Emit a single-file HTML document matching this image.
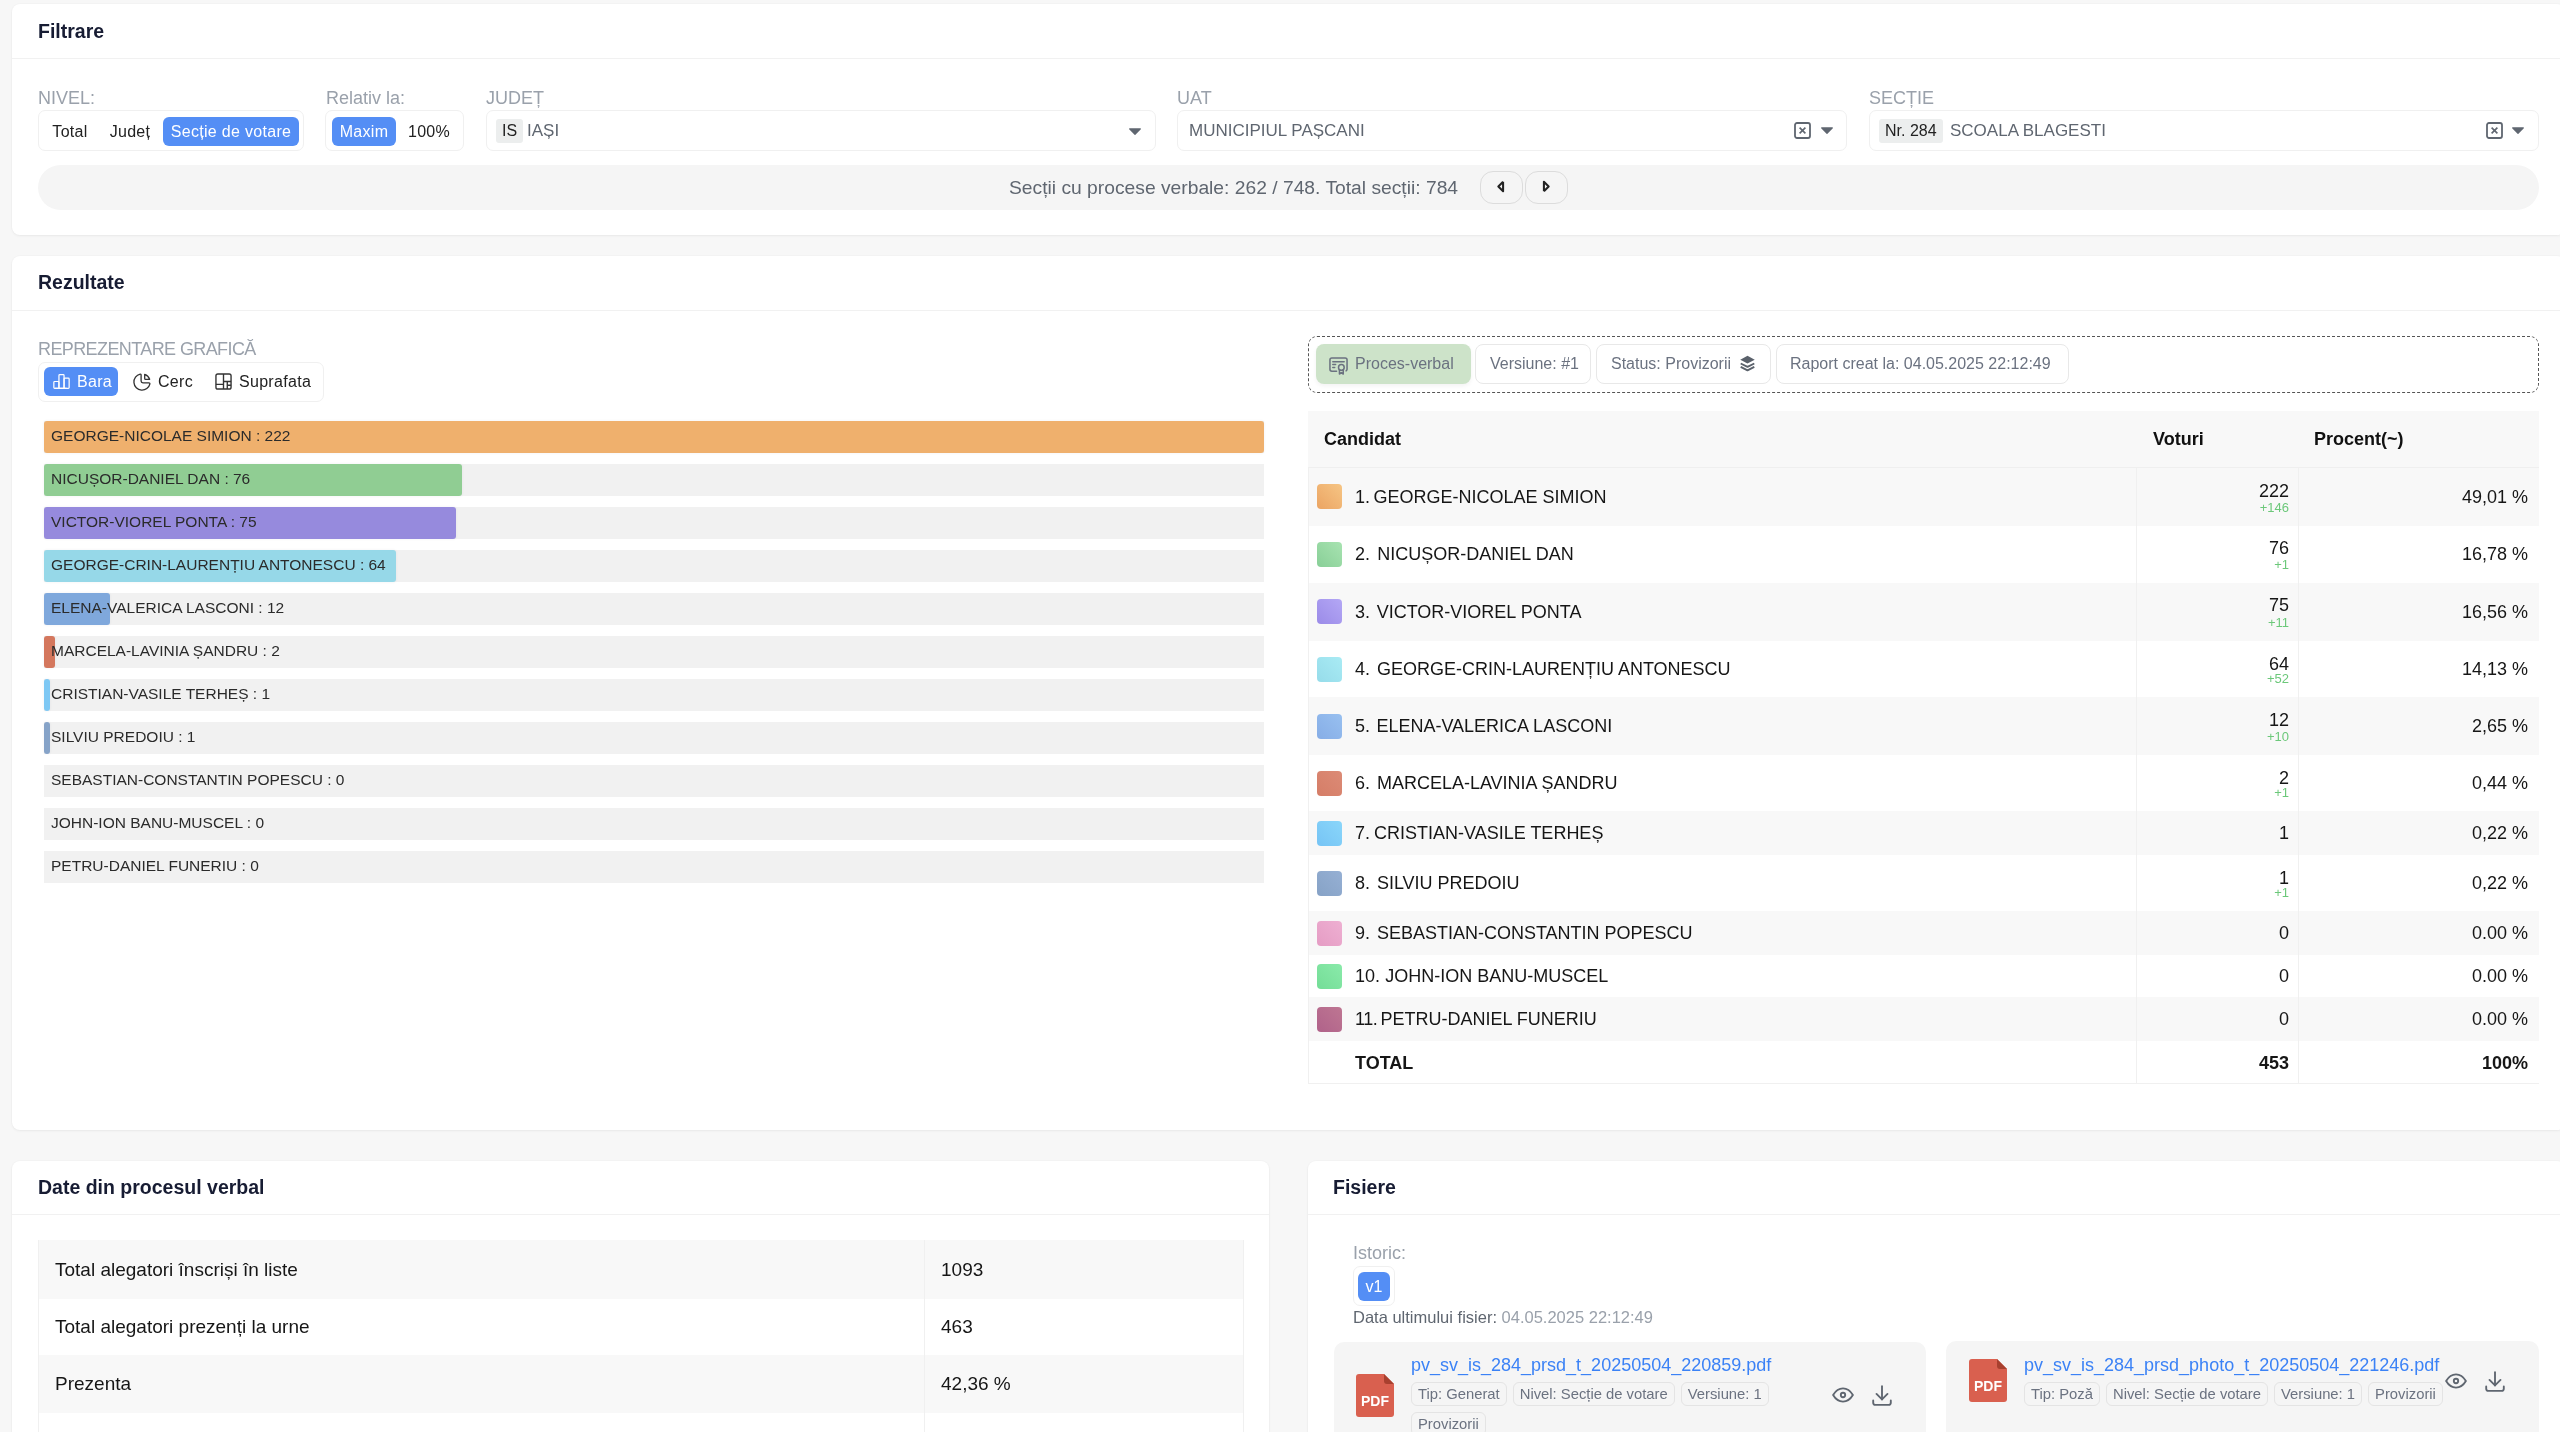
<!DOCTYPE html><html><head><meta charset="utf-8"><style>
*{box-sizing:border-box;margin:0;padding:0}
html,body{width:2560px;height:1432px;overflow:hidden;background:#f7f7f7;}
body{will-change:transform;font-family:"Liberation Sans",sans-serif;color:#222}
.abs{position:absolute;white-space:nowrap}
.card{position:absolute;background:#fff;border-radius:8px;box-shadow:0 1px 3px rgba(0,0,0,0.05),0 0 0 1px rgba(0,0,0,0.012)}
.chead{position:absolute;left:0;right:0;top:0;border-bottom:1px solid #f1f1f1}
.title{position:absolute;left:26px;font-size:19.5px;font-weight:bold;color:#171c33;white-space:nowrap;line-height:24px}
.lbl{position:absolute;font-size:18px;color:#9aa1ab;line-height:20px;white-space:nowrap}
.box{position:absolute;border:1px solid #f0f0f0;border-radius:7px;background:#fff}
.seg{position:absolute;font-size:16px;letter-spacing:0.3px;line-height:29px;height:29px;color:#222;white-space:nowrap;text-align:center;border-radius:6px}
.seg.on{background:#548ef5;color:#fff}
.tag{position:absolute;background:#eceeee;color:#222;font-size:16px;line-height:24px;border-radius:3px;padding:0 6px;white-space:nowrap}
.val{position:absolute;font-size:17px;color:#5f6670;line-height:24px;white-space:nowrap}
svg{position:absolute;overflow:visible}
.trk{position:absolute;left:44px;width:1220px;height:32px;background:#f1f1f1}
.bar{position:absolute;left:44px;height:32px;border-radius:3px;box-shadow:0 0 3px rgba(40,50,90,0.07)}
.btx{position:absolute;left:51px;font-size:15.5px;line-height:30px;color:#2b2b2b;white-space:nowrap}
.pill{position:absolute;top:344px;height:40px;border:1px solid #e8e8e8;border-radius:8px;font-size:16px;line-height:38px;color:#6b7280;white-space:nowrap}
.row{position:absolute;left:1308px;width:1231px;border-left:1px solid #f0f0f0}
.cn{position:absolute;left:1355px;font-size:18px;line-height:22px;color:#161616;white-space:nowrap}
.sq{position:absolute;left:1317px;width:25px;height:25px;border-radius:4px}
.vn{position:absolute;right:271px;font-size:18px;line-height:20px;color:#161616;text-align:right;white-space:nowrap}
.vd{position:absolute;right:271px;font-size:13px;line-height:14px;color:#6cc87a;text-align:right;white-space:nowrap}
.pc{position:absolute;right:32px;font-size:18px;line-height:22px;color:#161616;text-align:right;white-space:nowrap}
.vline{position:absolute;width:1px;background:#f0f0f0}
.ftag{height:24px;border:1px solid #e4e4e4;border-radius:6px;font-size:14.8px;line-height:22px;color:#6b7280;padding:0 6px;white-space:nowrap}
.ftags{position:absolute;display:flex;flex-wrap:wrap;gap:6px 6px}
</style></head><body>
<div class="card" style="left:12px;top:4px;width:2553px;height:231px"><div class="chead" style="height:55px"></div><div class="title" style="top:15px">Filtrare</div></div>
<div class="lbl" style="left:38px;top:88px">NIVEL:</div>
<div class="box" style="left:38px;top:110px;width:266px;height:41px"></div>
<div class="seg" style="left:44px;top:117px;width:52px">Total</div>
<div class="seg" style="left:100px;top:117px;width:60px">Județ</div>
<div class="seg on" style="left:163px;top:117px;width:136px">Secție de votare</div>
<div class="lbl" style="left:326px;top:88px">Relativ la:</div>
<div class="box" style="left:325px;top:110px;width:139px;height:41px"></div>
<div class="seg on" style="left:332px;top:117px;width:64px">Maxim</div>
<div class="seg" style="left:400px;top:117px;width:58px">100%</div>
<div class="lbl" style="left:486px;top:88px">JUDEȚ</div>
<div class="box" style="left:486px;top:110px;width:670px;height:41px"></div>
<div class="tag" style="left:496px;top:119px">IS</div>
<div class="val" style="left:527px;top:119px">IAȘI</div>
<svg style="left:1129px;top:128px" width="12" height="7" viewBox="0 0 12 7"><path d="M0.6 0.3h10.8a0.6 0.6 0 0 1 0.45 1l-5.4 5.4a0.6 0.6 0 0 1 -0.9 0l-5.4 -5.4a0.6 0.6 0 0 1 0.45 -1z" fill="#5f6670"/></svg>
<div class="lbl" style="left:1177px;top:88px">UAT</div>
<div class="box" style="left:1177px;top:110px;width:670px;height:41px"></div>
<div class="val" style="left:1189px;top:119px">MUNICIPIUL PAȘCANI</div>
<svg style="left:1794px;top:122px" width="17" height="17" viewBox="0 0 17 17"><rect x="1" y="1" width="15" height="15" rx="2" fill="none" stroke="#5f6670" stroke-width="1.8"/><path d="M5.6 5.6l5.8 5.8M11.4 5.6l-5.8 5.8" stroke="#5f6670" stroke-width="1.6" fill="none"/></svg>
<svg style="left:1821px;top:127px" width="12" height="7" viewBox="0 0 12 7"><path d="M0.6 0.3h10.8a0.6 0.6 0 0 1 0.45 1l-5.4 5.4a0.6 0.6 0 0 1 -0.9 0l-5.4 -5.4a0.6 0.6 0 0 1 0.45 -1z" fill="#5f6670"/></svg>
<div class="lbl" style="left:1869px;top:88px">SECȚIE</div>
<div class="box" style="left:1869px;top:110px;width:670px;height:41px"></div>
<div class="tag" style="left:1879px;top:119px">Nr. 284</div>
<div class="val" style="left:1950px;top:119px">SCOALA BLAGESTI</div>
<svg style="left:2486px;top:122px" width="17" height="17" viewBox="0 0 17 17"><rect x="1" y="1" width="15" height="15" rx="2" fill="none" stroke="#5f6670" stroke-width="1.8"/><path d="M5.6 5.6l5.8 5.8M11.4 5.6l-5.8 5.8" stroke="#5f6670" stroke-width="1.6" fill="none"/></svg>
<svg style="left:2512px;top:127px" width="12" height="7" viewBox="0 0 12 7"><path d="M0.6 0.3h10.8a0.6 0.6 0 0 1 0.45 1l-5.4 5.4a0.6 0.6 0 0 1 -0.9 0l-5.4 -5.4a0.6 0.6 0 0 1 0.45 -1z" fill="#5f6670"/></svg>
<div class="abs" style="left:38px;top:165px;width:2501px;height:45px;border-radius:23px;background:#f5f5f5"></div>
<div class="abs" style="left:1009px;top:176px;font-size:19.25px;line-height:24px;color:#5f6670">Secții cu procese verbale: 262 / 748. Total secții: 784</div>
<div class="abs" style="left:1480px;top:171px;width:43px;height:33px;border:1px solid #dcdcdc;border-radius:13px"></div>
<div class="abs" style="left:1525px;top:171px;width:43px;height:33px;border:1px solid #dcdcdc;border-radius:13px"></div>
<svg style="left:1492px;top:177px" width="19" height="19" viewBox="0 0 24 24"><path d="M14 6l-6 6l6 6v-12" fill="none" stroke="#222" stroke-width="2.6" stroke-linejoin="round"/></svg>
<svg style="left:1536px;top:177px" width="19" height="19" viewBox="0 0 24 24"><path d="M10 18l6 -6l-6 -6v12" fill="none" stroke="#222" stroke-width="2.6" stroke-linejoin="round"/></svg>
<div class="card" style="left:12px;top:256px;width:2553px;height:874px"><div class="chead" style="height:55px"></div><div class="title" style="top:14px">Rezultate</div></div>
<div class="lbl" style="left:38px;top:339px;letter-spacing:-0.6px">REPREZENTARE GRAFICĂ</div>
<div class="box" style="left:38px;top:362px;width:286px;height:40px"></div>
<div class="seg on" style="left:44px;top:367px;width:74px"></div>
<div class="seg" style="left:77px;top:367px;color:#fff">Bara</div>
<div class="seg" style="left:158px;top:367px">Cerc</div>
<div class="seg" style="left:239px;top:367px">Suprafata</div>
<svg style="left:53px;top:373px" width="17" height="17" viewBox="2 3 20 18"><g fill="none" stroke="#fff" stroke-width="1.45" stroke-linejoin="round"><path d="M3 13a1 1 0 0 1 1 -1h4a1 1 0 0 1 1 1v6a1 1 0 0 1 -1 1h-4a1 1 0 0 1 -1 -1z"/><path d="M15 9a1 1 0 0 1 1 -1h4a1 1 0 0 1 1 1v10a1 1 0 0 1 -1 1h-4a1 1 0 0 1 -1 -1z"/><path d="M9 5a1 1 0 0 1 1 -1h4a1 1 0 0 1 1 1v14a1 1 0 0 1 -1 1h-4a1 1 0 0 1 -1 -1z"/><path d="M4 20h14"/></g></svg>
<svg style="left:133px;top:373px" width="18" height="18" viewBox="2 2 20 20"><g fill="none" stroke="#333" stroke-width="1.45" stroke-linejoin="round" stroke-linecap="round"><path d="M10 3.2a9 9 0 1 0 10.8 10.8a1 1 0 0 0 -1 -1h-6.8a2 2 0 0 1 -2 -2v-7a.9 .9 0 0 0 -1 -.8"/><path d="M15 3.5a9 9 0 0 1 5.5 5.5h-4.5a1 1 0 0 1 -1 -1v-4.5"/></g></svg>
<svg style="left:215px;top:373px" width="17" height="17" viewBox="3 3 18 18"><g fill="none" stroke="#333" stroke-width="1.45" stroke-linejoin="round"><rect x="4" y="4" width="16" height="16" rx="2"/><path d="M12 4v16M4 15h8M12 12h8M16 12v8M16 16h4"/></g></svg>
<div class="trk" style="top:421px"></div>
<div class="bar" style="top:421px;width:1220.0px;background:#efb06d"></div>
<div class="btx" style="top:421px">GEORGE-NICOLAE SIMION : 222</div>
<div class="trk" style="top:464px"></div>
<div class="bar" style="top:464px;width:417.7px;background:#90cd93"></div>
<div class="btx" style="top:464px">NICUȘOR-DANIEL DAN : 76</div>
<div class="trk" style="top:507px"></div>
<div class="bar" style="top:507px;width:412.2px;background:#968add"></div>
<div class="btx" style="top:507px">VICTOR-VIOREL PONTA : 75</div>
<div class="trk" style="top:550px"></div>
<div class="bar" style="top:550px;width:351.7px;background:#96d8e8"></div>
<div class="btx" style="top:550px">GEORGE-CRIN-LAURENȚIU ANTONESCU : 64</div>
<div class="trk" style="top:593px"></div>
<div class="bar" style="top:593px;width:65.9px;background:#7fa8dc"></div>
<div class="btx" style="top:593px">ELENA-VALERICA LASCONI : 12</div>
<div class="trk" style="top:636px"></div>
<div class="bar" style="top:636px;width:11.0px;background:#d4775d"></div>
<div class="btx" style="top:636px">MARCELA-LAVINIA ȘANDRU : 2</div>
<div class="trk" style="top:679px"></div>
<div class="bar" style="top:679px;width:5.5px;background:#7ec8f4"></div>
<div class="btx" style="top:679px">CRISTIAN-VASILE TERHEȘ : 1</div>
<div class="trk" style="top:722px"></div>
<div class="bar" style="top:722px;width:5.5px;background:#86a3c8"></div>
<div class="btx" style="top:722px">SILVIU PREDOIU : 1</div>
<div class="trk" style="top:765px"></div>
<div class="btx" style="top:765px">SEBASTIAN-CONSTANTIN POPESCU : 0</div>
<div class="trk" style="top:808px"></div>
<div class="btx" style="top:808px">JOHN-ION BANU-MUSCEL : 0</div>
<div class="trk" style="top:851px"></div>
<div class="btx" style="top:851px">PETRU-DANIEL FUNERIU : 0</div>
<div class="abs" style="left:1308px;top:336px;width:1231px;height:57px;border:1px dashed #555;border-radius:9px"></div>
<div class="abs" style="left:1316px;top:344px;width:155px;height:40px;border-radius:8px;background:#cde3c9;box-shadow:0 2px 4px rgba(0,0,0,0.05)"></div>
<svg style="left:1329px;top:356px" width="19" height="19" viewBox="2 3 20 20"><g fill="none" stroke="#6b7280" stroke-width="1.6" stroke-linejoin="round" stroke-linecap="round"><path d="M15 15m-3 0a3 3 0 1 0 6 0a3 3 0 1 0 -6 0"/><path d="M13 17.5v4.5l2 -1.5l2 1.5v-4.5"/><path d="M10 19h-5a2 2 0 0 1 -2 -2v-10c0 -1.1 .9 -2 2 -2h14a2 2 0 0 1 2 2v10a2 2 0 0 1 -1 1.73"/><path d="M6 9l12 0M6 12l3 0M6 15l2 0"/></g></svg>
<div class="abs" style="left:1355px;top:353px;font-size:16px;line-height:22px;color:#6b7280">Proces-verbal</div>
<div class="pill" style="left:1475px;width:116px;padding-left:14px">Versiune: #1</div>
<div class="pill" style="left:1596px;width:175px;padding-left:14px">Status: Provizorii</div>
<svg style="left:1739px;top:355px" width="17" height="17" viewBox="2 2 20 20"><path d="M12 3l8.5 4.5l-8.5 4.5l-8.5 -4.5z" fill="#5a616b"/><path d="M4 12l8 4l8 -4M4 16l8 4l8 -4" fill="none" stroke="#5a616b" stroke-width="2.2" stroke-linejoin="round"/></svg>
<div class="pill" style="left:1776px;width:293px;padding-left:13px">Raport creat la: 04.05.2025 22:12:49</div>
<div class="abs" style="left:1308px;top:411px;width:1231px;height:57px;background:#f8f8f8;border-bottom:1px solid #efefef"></div>
<div class="abs" style="left:1324px;top:428px;font-size:18px;line-height:22px;font-weight:bold;color:#111">Candidat</div>
<div class="abs" style="left:2153px;top:428px;font-size:18px;line-height:22px;font-weight:bold;color:#111">Voturi</div>
<div class="abs" style="left:2314px;top:428px;font-size:18px;line-height:22px;font-weight:bold;color:#111">Procent(~)</div>
<div class="row" style="top:468px;height:57.5px;background:#f8f8f8"></div>
<div class="sq" style="top:484.2px;background:linear-gradient(45deg,#eba463,#f6c584)"></div>
<div class="cn" style="top:485.8px">1.</div>
<div class="cn" style="top:485.8px;left:1373.5px">GEORGE-NICOLAE SIMION</div>
<div class="vn" style="top:480.5px">222</div>
<div class="vd" style="top:500.5px">+146</div>
<div class="pc" style="top:485.8px">49,01 %</div>
<div class="row" style="top:525.5px;height:57.0px;background:#fff"></div>
<div class="sq" style="top:541.5px;background:linear-gradient(45deg,#88cf97,#a8e3b1)"></div>
<div class="cn" style="top:543.0px">2.</div>
<div class="cn" style="top:543.0px;left:1377.3px">NICUȘOR-DANIEL DAN</div>
<div class="vn" style="top:538.0px">76</div>
<div class="vd" style="top:557.5px">+1</div>
<div class="pc" style="top:543.0px">16,78 %</div>
<div class="row" style="top:582.5px;height:58.5px;background:#f8f8f8"></div>
<div class="sq" style="top:599.2px;background:linear-gradient(45deg,#9b8be8,#b4a7f5)"></div>
<div class="cn" style="top:600.8px">3.</div>
<div class="cn" style="top:600.8px;left:1376.7px">VICTOR-VIOREL PONTA</div>
<div class="vn" style="top:595.0px">75</div>
<div class="vd" style="top:616.0px">+11</div>
<div class="pc" style="top:600.8px">16,56 %</div>
<div class="row" style="top:641px;height:56px;background:#fff"></div>
<div class="sq" style="top:656.5px;background:linear-gradient(45deg,#96dcea,#a9ebf4)"></div>
<div class="cn" style="top:658.0px">4.</div>
<div class="cn" style="top:658.0px;left:1376.9px">GEORGE-CRIN-LAURENȚIU ANTONESCU</div>
<div class="vn" style="top:653.5px">64</div>
<div class="vd" style="top:672.0px">+52</div>
<div class="pc" style="top:658.0px">14,13 %</div>
<div class="row" style="top:697px;height:58px;background:#f8f8f8"></div>
<div class="sq" style="top:713.5px;background:linear-gradient(45deg,#86ade6,#98c0f0)"></div>
<div class="cn" style="top:715.0px">5.</div>
<div class="cn" style="top:715.0px;left:1376.4px">ELENA-VALERICA LASCONI</div>
<div class="vn" style="top:709.5px">12</div>
<div class="vd" style="top:730.0px">+10</div>
<div class="pc" style="top:715.0px">2,65 %</div>
<div class="row" style="top:755px;height:56px;background:#fff"></div>
<div class="sq" style="top:770.5px;background:linear-gradient(45deg,#d57d67,#dc8b76)"></div>
<div class="cn" style="top:772.0px">6.</div>
<div class="cn" style="top:772.0px;left:1376.9px">MARCELA-LAVINIA ȘANDRU</div>
<div class="vn" style="top:767.5px">2</div>
<div class="vd" style="top:786.0px">+1</div>
<div class="pc" style="top:772.0px">0,44 %</div>
<div class="row" style="top:811px;height:44px;background:#f8f8f8"></div>
<div class="sq" style="top:820.5px;background:linear-gradient(45deg,#76c4f5,#8ad6fa)"></div>
<div class="cn" style="top:822.0px">7.</div>
<div class="cn" style="top:822.0px;left:1374.0px">CRISTIAN-VASILE TERHEȘ</div>
<div class="vn" style="top:823.0px">1</div>
<div class="pc" style="top:822.0px">0,22 %</div>
<div class="row" style="top:855px;height:56px;background:#fff"></div>
<div class="sq" style="top:870.5px;background:linear-gradient(45deg,#86a2c6,#96b0d4)"></div>
<div class="cn" style="top:872.0px">8.</div>
<div class="cn" style="top:872.0px;left:1376.9px">SILVIU PREDOIU</div>
<div class="vn" style="top:867.5px">1</div>
<div class="vd" style="top:886.0px">+1</div>
<div class="pc" style="top:872.0px">0,22 %</div>
<div class="row" style="top:911px;height:44px;background:#f8f8f8"></div>
<div class="sq" style="top:920.5px;background:linear-gradient(45deg,#e59cc4,#eeb0d2)"></div>
<div class="cn" style="top:922.0px">9.</div>
<div class="cn" style="top:922.0px;left:1376.9px">SEBASTIAN-CONSTANTIN POPESCU</div>
<div class="vn" style="top:923.0px">0</div>
<div class="pc" style="top:922.0px">0.00 %</div>
<div class="row" style="top:955px;height:42px;background:#fff"></div>
<div class="sq" style="top:963.5px;background:linear-gradient(45deg,#74dd97,#8aeaaa)"></div>
<div class="cn" style="top:965.0px">10.</div>
<div class="cn" style="top:965.0px;left:1385.2px">JOHN-ION BANU-MUSCEL</div>
<div class="vn" style="top:966.0px">0</div>
<div class="pc" style="top:965.0px">0.00 %</div>
<div class="row" style="top:997px;height:44px;background:#f8f8f8"></div>
<div class="sq" style="top:1006.5px;background:linear-gradient(45deg,#b0628a,#be7692)"></div>
<div class="cn" style="top:1008.0px;letter-spacing:-0.5px">11.</div>
<div class="cn" style="top:1008.0px;left:1380.4px">PETRU-DANIEL FUNERIU</div>
<div class="vn" style="top:1009.0px">0</div>
<div class="pc" style="top:1008.0px">0.00 %</div>
<div class="row" style="top:1041px;height:43px;background:#fff;border-bottom:1px solid #f0f0f0"></div>
<div class="cn" style="top:1051.5px;font-weight:bold">TOTAL</div>
<div class="vn" style="top:1052.5px;font-weight:bold">453</div>
<div class="pc" style="top:1051.5px;font-weight:bold">100%</div>
<div class="vline" style="left:2136px;top:468px;height:616px"></div>
<div class="vline" style="left:2298px;top:468px;height:616px"></div>
<div class="card" style="left:12px;top:1161px;width:1257px;height:400px"><div class="chead" style="height:54px"></div><div class="title" style="top:14px">Date din procesul verbal</div></div>
<div class="abs" style="left:38px;top:1240px;width:1206px;height:59px;background:#f8f8f8;border-left:1px solid #f0f0f0;border-right:1px solid #f0f0f0"></div>
<div class="abs" style="left:55px;top:1258.5px;font-size:19px;line-height:22px;color:#161616">Total alegatori înscriși în liste</div>
<div class="abs" style="left:941px;top:1258.5px;font-size:19px;line-height:22px;color:#161616">1093</div>
<div class="abs" style="left:38px;top:1299px;width:1206px;height:56px;background:#fff;border-left:1px solid #f0f0f0;border-right:1px solid #f0f0f0"></div>
<div class="abs" style="left:55px;top:1316.0px;font-size:19px;line-height:22px;color:#161616">Total alegatori prezenți la urne</div>
<div class="abs" style="left:941px;top:1316.0px;font-size:19px;line-height:22px;color:#161616">463</div>
<div class="abs" style="left:38px;top:1355px;width:1206px;height:57.5px;background:#f8f8f8;border-left:1px solid #f0f0f0;border-right:1px solid #f0f0f0"></div>
<div class="abs" style="left:55px;top:1372.8px;font-size:19px;line-height:22px;color:#161616">Prezenta</div>
<div class="abs" style="left:941px;top:1372.8px;font-size:19px;line-height:22px;color:#161616">42,36 %</div>
<div class="abs" style="left:38px;top:1412.5px;width:1206px;height:57.5px;background:#fff;border-left:1px solid #f0f0f0;border-right:1px solid #f0f0f0"></div>
<div class="vline" style="left:924px;top:1240px;height:230px"></div>
<div class="card" style="left:1308px;top:1161px;width:1257px;height:400px"><div class="chead" style="height:54px"></div><div class="title" style="top:14px;left:25px">Fisiere</div></div>
<div class="abs" style="left:1353px;top:1243px;font-size:18px;line-height:20px;color:#9aa1ab">Istoric:</div>
<div class="abs" style="left:1353px;top:1266px;width:42px;height:40px;border:1px solid #f0f0f0;border-radius:7px"></div>
<div class="abs" style="left:1358px;top:1272px;width:32px;height:29px;border-radius:6px;background:#548ef5;color:#fff;font-size:16px;line-height:29px;text-align:center">v1</div>
<div class="abs" style="left:1353px;top:1307px;font-size:16.5px;line-height:20px;color:#5f6670">Data ultimului fisier: <span style="color:#9aa1ab">04.05.2025 22:12:49</span></div>
<div class="abs" style="left:1334px;top:1342px;width:592px;height:120px;border-radius:10px;background:#f5f5f5"></div>
<svg style="left:1356px;top:1374px" width="38" height="43" viewBox="0 0 38 43"><path d="M3 0h25l10 10v30a3 3 0 0 1 -3 3h-32a3 3 0 0 1 -3 -3v-37a3 3 0 0 1 3 -3z" fill="#d9604f"/><path d="M28 0l10 10h-7a3 3 0 0 1 -3 -3z" fill="#a8402f"/><text x="19" y="32" font-family="Liberation Sans" font-weight="bold" font-size="14" fill="#fff" text-anchor="middle">PDF</text></svg>
<div class="abs" style="left:1411px;top:1355px;font-size:18px;line-height:20px;color:#3b82f6">pv_sv_is_284_prsd_t_20250504_220859.pdf</div>
<div class="ftags" style="left:1411px;top:1382px;width:400px"><div class="ftag">Tip: Generat</div><div class="ftag">Nivel: Secție de votare</div><div class="ftag">Versiune: 1</div><div class="ftag">Provizorii</div></div>
<svg style="left:1832px;top:1384px" width="22" height="22" viewBox="2 2 20 20"><g fill="none" stroke="#5f6670" stroke-width="1.7" stroke-linecap="round" stroke-linejoin="round"><path d="M10 12a2 2 0 1 0 4 0a2 2 0 0 0 -4 0"/><path d="M21 12c-2.4 4 -5.4 6 -9 6c-3.6 0 -6.6 -2 -9 -6c2.4 -4 5.4 -6 9 -6c3.6 0 6.6 2 9 6"/></g></svg>
<svg style="left:1871px;top:1384px" width="22" height="22" viewBox="2 2 20 20"><g fill="none" stroke="#5f6670" stroke-width="1.7" stroke-linecap="round" stroke-linejoin="round"><path d="M4 17v2a2 2 0 0 0 2 2h12a2 2 0 0 0 2 -2v-2"/><path d="M7 11l5 5l5 -5"/><path d="M12 4l0 12"/></g></svg>
<div class="abs" style="left:1946px;top:1341px;width:593px;height:120px;border-radius:10px;background:#f5f5f5"></div>
<svg style="left:1969px;top:1359px" width="38" height="43" viewBox="0 0 38 43"><path d="M3 0h25l10 10v30a3 3 0 0 1 -3 3h-32a3 3 0 0 1 -3 -3v-37a3 3 0 0 1 3 -3z" fill="#d9604f"/><path d="M28 0l10 10h-7a3 3 0 0 1 -3 -3z" fill="#a8402f"/><text x="19" y="32" font-family="Liberation Sans" font-weight="bold" font-size="14" fill="#fff" text-anchor="middle">PDF</text></svg>
<div class="abs" style="left:2024px;top:1355px;font-size:18px;line-height:20px;color:#3b82f6">pv_sv_is_284_prsd_photo_t_20250504_221246.pdf</div>
<div class="ftags" style="left:2024px;top:1382px;flex-wrap:nowrap"><div class="ftag">Tip: Poză</div><div class="ftag">Nivel: Secție de votare</div><div class="ftag">Versiune: 1</div><div class="ftag">Provizorii</div></div>
<svg style="left:2445px;top:1370px" width="22" height="22" viewBox="2 2 20 20"><g fill="none" stroke="#5f6670" stroke-width="1.7" stroke-linecap="round" stroke-linejoin="round"><path d="M10 12a2 2 0 1 0 4 0a2 2 0 0 0 -4 0"/><path d="M21 12c-2.4 4 -5.4 6 -9 6c-3.6 0 -6.6 -2 -9 -6c2.4 -4 5.4 -6 9 -6c3.6 0 6.6 2 9 6"/></g></svg>
<svg style="left:2484px;top:1370px" width="22" height="22" viewBox="2 2 20 20"><g fill="none" stroke="#5f6670" stroke-width="1.7" stroke-linecap="round" stroke-linejoin="round"><path d="M4 17v2a2 2 0 0 0 2 2h12a2 2 0 0 0 2 -2v-2"/><path d="M7 11l5 5l5 -5"/><path d="M12 4l0 12"/></g></svg>
</body></html>
